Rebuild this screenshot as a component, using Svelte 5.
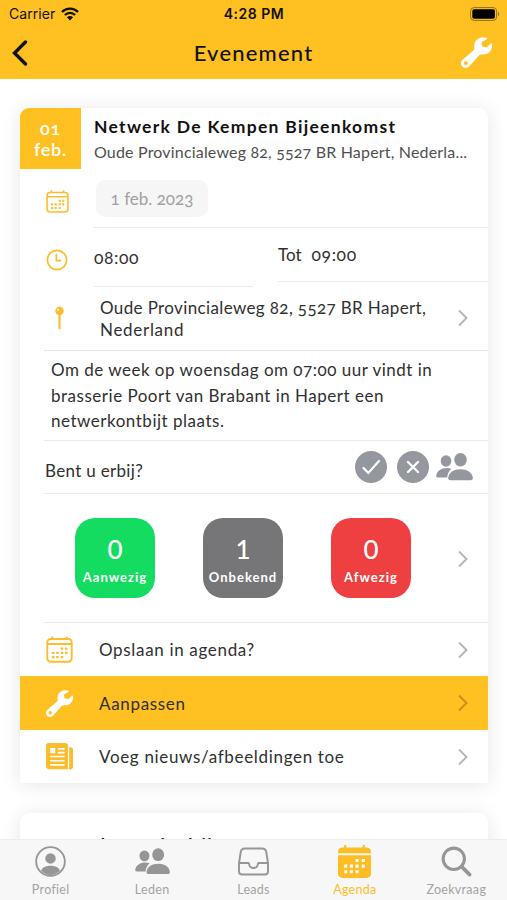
<script lang="ts">
  const counts = [
    { value: 0, label: 'Aanwezig', tone: 'present' },
    { value: 1, label: 'Onbekend', tone: 'unknown' },
    { value: 0, label: 'Afwezig', tone: 'absent' }
  ];

  const actions = [
    { icon: 'calendar', label: 'Opslaan in agenda?', key: 'save' },
    { icon: 'wrench', label: 'Aanpassen', key: 'edit' },
    { icon: 'news', label: 'Voeg nieuws/afbeeldingen toe', key: 'news' }
  ];

  const tabs = [
    { icon: 'profile', label: 'Profiel' },
    { icon: 'people', label: 'Leden' },
    { icon: 'tray', label: 'Leads' },
    { icon: 'agenda', label: 'Agenda' },
    { icon: 'search', label: 'Zoekvraag' }
  ];

  let activeTab = $state('Agenda');
</script>

{#snippet icon(name: string)}
  <svg class="icon {name}" viewBox="0 0 32 32" fill="none" stroke="currentColor">
    {#if name === 'calendar'}
      <rect x="1.5" y="3.5" width="29" height="27" rx="4" stroke-width="2.2" />
      <path d="M1.5 9.5h29M7.5 .5v3M24.500 .5v3" stroke-width="2.2" />
      <path d="M17.5 15h3M22.5 15h3M7 20h3M12 20h3M17.5 20h3M22.5 20h3M7 25h3M12 25h3M17.5 25h3" stroke-width="2.8" />
    {:else if name === 'clock'}
      <circle cx="16" cy="16" r="14" stroke-width="2.5" />
      <path d="M15 7v10h7" stroke-width="2.4" />
    {:else if name === 'pin'}
      <path d="M16 12v17" stroke-width="2.8" stroke-linecap="round" />
      <circle cx="16" cy="7" r="5.4" fill="currentColor" stroke="none" />
      <circle cx="14.3" cy="5.3" r="1.3" fill="#fff" stroke="none" />
    {:else if name === 'wrench'}
      <path fill="currentColor" stroke="none" fill-rule="evenodd" d="M26.800 1C21.500-.9 15.400 1.600 14 6.700c-.6 2-.5 3.200-.1 5 .1.800-.2 1.400-.8 2L1.600 23.600c-2.200 2-2.200 5 -.3 6.900s5.200 2 7.200-.2L18.900 18.800c.6-.6 1.200-.9 2-.8 6.300 1.200 12-3.500 11-10.800-.1-.7-.7-.8-1.200-.4L26.500 10.800l-4.500-1.100-.9-4.300 5.900-3.300c.5-.4.400-.8-.2-1.100zM5 25a2 2 0 1 1 0 4 2 2 0 0 1 0-4z" />
    {:else if name === 'news'}
      <path fill="currentColor" stroke="none" fill-rule="evenodd" d="M3 0h20a3 3 0 0 1 3 3v28H4a4 4 0 0 1-4-4V3a3 3 0 0 1 3-3zM5 6v6h6V6zM14 6h8v2h-8zM14 10.5h8v2h-8zM5 15h17v2H5zM5 20h17v2H5zM5 25h17v2H5z" />
      <path fill="currentColor" stroke="none" d="M27.500 5H29a3 3 0 0 1 3 3v20a3 3 0 0 1-5.500 2c1-1 1-2 1-3z" />
    {:else if name === 'profile'}
      <circle cx="16" cy="16" r="14.8" stroke-width="1.9" />
      <circle cx="16" cy="12.8" r="5.4" fill="currentColor" stroke="none" />
      <path fill="currentColor" stroke="none" d="M6.3 25.2c2-3.6 5.8-4.700 9.700-4.700s7.700 1.100 9.700 4.700A14 14 0 0 1 16 30a14 14 0 0 1-9.700-4.800z" />
    {:else if name === 'tray'}
      <path d="M7 2.500h18c2.400 0 3.600 1 4.100 3.200L31 18v8c0 2.400-1.300 3.500-3.500 3.500h-23C2.300 29.500 1 28.400 1 26v-8L2.900 5.700C3.400 3.500 4.600 2.500 7 2.500zM1 17.500h9.500c.8 0 1 .5 1 1.200 0 5.400 9 5.400 9 0 0-.7.200-1.200 1-1.200H31" stroke-width="2" />
    {:else if name === 'agenda'}
      <path fill="currentColor" stroke="none" d="M0 8V7c0-2.800 1.700-4.500 4.500-4.500H6V0h2v2.500h16V0h2v2.500h1.500C30.300 2.500 32 4.200 32 7v1z" />
      <path fill="currentColor" stroke="none" d="M0 10h32v17.500c0 2.800-1.700 4.500-4.500 4.500h-23C1.700 32 0 30.300 0 27.500z" />
      <path d="M17 15h3M23 15h3M6 20.500h3M11.500 20.500h3M17 20.500h3M23 20.500h3M6 26h3M11.500 26h3M17 26h3" stroke="#fff" stroke-width="3" />
    {:else if name === 'search'}
      <circle cx="13.200" cy="13.200" r="11" stroke-width="3.200" />
      <path d="M21.500 21.500l8 8" stroke-width="3.800" stroke-linecap="round" />
    {/if}
  </svg>
{/snippet}

{#snippet people()}
  <svg class="people" viewBox="0 0 37 28" fill="currentColor">
    <ellipse cx="10" cy="8" rx="5.300" ry="5.700" />
    <path d="M15.500 15.800C9 13.500 1 16.500.3 22.500c-.2 1.300.4 2 1.600 2h9.300c.3-3.500 1.500-6.400 4.300-8.700z" />
    <ellipse cx="24.500" cy="6.800" rx="6.300" ry="6.700" />
    <path d="M24.500 16.300c6.800 0 11.500 3 12.300 8.500.2 1.500-.7 2.500-2 2.500H14.200c-1.300 0-2.200-1-2-2.500.8-5.500 5.500-8.500 12.300-8.500z" />
  </svg>
{/snippet}

{#snippet chevron()}
  <svg class="chevron" viewBox="0 0 10 18" fill="none" stroke="currentColor">
    <path d="M1 1.500 8.500 9 1 16.500" stroke-width="1.900" />
  </svg>
{/snippet}

<div class="app">
  <header>
    <div class="status">
      <div class="carrier">
        <span>Carrier</span>
        <svg class="wifi" viewBox="0 0 18 14" fill="none" stroke="currentColor" stroke-width="2.400">
          <path d="M1 5c4.500-4.500 11.500-4.500 16 0M3.900 8c2.900-2.900 7.300-2.900 10.200 0" />
          <path d="M9 13.500 5.900 10.200c1.700-1.700 4.500-1.700 6.200 0z" fill="currentColor" stroke="none" />
        </svg>
      </div>
      <span class="time">4:28 PM</span>
      <svg class="battery" viewBox="0 0 30 14">
        <rect x=".6" y=".6" width="26" height="12.800" rx="3.500" fill="none" stroke="#8f7022" />
        <rect x="2.300" y="2.300" width="22.600" height="9.400" rx="1.800" />
        <path d="M28 4.800c1.600.7 1.600 3.700 0 4.400z" fill="#8f7022" />
      </svg>
    </div>
    <div class="navbar">
      <button aria-label="Terug">
        <svg class="back" viewBox="0 0 16 26" fill="none" stroke="currentColor">
          <path d="M13.500 2 2.500 13l11 11" stroke-width="3.400" stroke-linecap="round" />
        </svg>
      </button>
      <h1>Evenement</h1>
      <button class="settings" aria-label="Aanpassen">{@render icon('wrench')}</button>
    </div>
  </header>

  <main>
    <section class="card">
      <div class="summary">
        <div class="date-badge"><span class="day">01</span><span>feb.</span></div>
        <div class="heading">
          <h2>Netwerk De Kempen Bijeenkomst</h2>
          <p>Oude Provincialeweg 82, 5527 BR Hapert, Nederla...</p>
        </div>
      </div>

      <div class="row date-row">
        {@render icon('calendar')}
        <div class="field"><span class="chip">1 feb. 2023</span></div>
      </div>

      <div class="row time-row">
        {@render icon('clock')}
        <div class="from"><span class="hour">08:00</span></div>
        <div class="until"><span>Tot</span><span class="hour">09:00</span></div>
      </div>

      <div class="row place">
        {@render icon('pin')}
        <p>Oude Provincialeweg 82, 5527 BR Hapert,<br /><span class="country">Nederland</span></p>
        {@render chevron()}
      </div>

      <p class="description">
        Om de week op woensdag om 07:00 uur vindt in<br />
        brasserie Poort van Brabant in Hapert een<br />
        netwerkontbijt plaats.
      </p>

      <div class="attend">
        <span>Bent u erbij?</span>
        <svg class="round" viewBox="0 0 32 32" fill="none" stroke="#fff" stroke-width="2.200" stroke-linecap="round">
          <circle cx="16" cy="16" r="16" fill="#94979e" stroke="none" />
          <path d="m8.500 17 4.800 5L24 10" />
        </svg>
        <svg class="round" viewBox="0 0 32 32" fill="none" stroke="#fff" stroke-width="2.400" stroke-linecap="round">
          <circle cx="16" cy="16" r="16" fill="#94979e" stroke="none" />
          <path d="m11 11 10 10M21 11 11 21" />
        </svg>
        {@render people()}
      </div>

      <div class="counts">
        {#each counts as count}
          <div class="count {count.tone}">
            <strong>{count.value}</strong>
            <span>{count.label}</span>
          </div>
        {/each}
        {@render chevron()}
      </div>

      {#each actions as action}
        <div class="action {action.key}">
          {@render icon(action.icon)}
          <span>{action.label}</span>
          {@render chevron()}
        </div>
      {/each}
    </section>

    <section class="card next">
      <h2>Samenkomst bedrijven</h2>
    </section>
  </main>

  <nav>
    {#each tabs as tab}
      <button class="tab" class:active={tab.label === activeTab} onclick={() => (activeTab = tab.label)}>
        {#if tab.icon === 'people'}
          {@render people()}
        {:else}
          {@render icon(tab.icon)}
        {/if}
        <span>{tab.label}</span>
      </button>
    {/each}
  </nav>
</div>

<style>
  :global(body) {
    margin: 0;
  }

  .app {
    height: 900px;
    display: flex;
    flex-direction: column;
    overflow: hidden;
    background: #fff;
    color: #303030;
    font-family: Lato, 'Open Sans', sans-serif;
    font-size: 17px;
    font-variant-numeric: oldstyle-nums;
  }

  h1,
  h2,
  p {
    margin: 0;
    font-weight: 400;
  }

  button {
    padding: 0;
    border: 0;
    background: none;
    color: inherit;
    font: inherit;
  }

  svg {
    display: block;
    flex: none;
  }

  header {
    flex: none;
    height: 79px;
    background: #ffc021;
    color: #111;
  }

  .status {
    height: 27px;
    display: grid;
    grid-template-columns: 1fr auto 1fr;
    align-items: center;
    padding: 0 7px 0 9px;
    font-family: Inter, sans-serif;
    font-size: 14px;
    font-variant-numeric: normal;
  }

  .carrier {
    display: flex;
    align-items: center;
    gap: 6px;
    letter-spacing: 0.05px;
  }

  .wifi {
    width: 18px;
    height: 14px;
  }

  .time {
    margin-left: -1px;
    font-weight: 600;
    letter-spacing: 0.5px;
  }

  .battery {
    width: 30px;
    height: 14px;
    justify-self: end;
  }

  .navbar {
    height: 52px;
    display: grid;
    grid-template-columns: 50px 1fr 50px;
    align-items: center;
    padding: 0 14px 0 12px;
  }

  .navbar h1 {
    margin-top: -2px;
    padding-left: 2px;
    font-size: 22px;
    font-weight: 500;
    text-align: center;
    letter-spacing: 1.2px;
  }

  .back {
    width: 16px;
    height: 26px;
    margin-top: -1px;
  }

  .settings {
    color: #fff;
    justify-self: end;
  }

  .settings .icon {
    width: 31px;
    height: 31px;
    margin: -2px 1px 0 0;
  }

  main {
    flex: 1;
    min-height: 0;
    overflow: hidden;
    padding: 29px 19px 0 20px;
  }

  .card {
    border-radius: 9px 9px 2px 2px;
    background: #fff;
    box-shadow: 0 2px 20px rgba(0, 0, 0, 0.1);
  }

  .summary {
    display: flex;
    height: 61px;
  }

  .date-badge {
    width: 61px;
    flex: none;
    display: flex;
    flex-direction: column;
    align-items: center;
    justify-content: center;
    padding-top: 2px;
    box-sizing: border-box;
    border-radius: 9px 0 0;
    background: #ffc021;
    color: #fff;
    font-size: 18px;
    font-weight: 600;
    line-height: 21px;
    letter-spacing: 0.7px;
  }

  .day {
    margin-top: -2px;
  }

  .heading {
    padding: 8px 0 0 13px;
    white-space: nowrap;
  }

  h2 {
    color: #111;
    font-size: 17.5px;
    font-weight: 700;
    line-height: 22px;
    letter-spacing: 1.3px;
  }

  .heading p {
    margin-top: 3px;
    color: #505050;
    font-size: 16px;
    line-height: 21px;
    letter-spacing: 0.18px;
  }

  .row {
    display: flex;
  }

  .row > .icon {
    color: #fbbd2c;
  }

  .date-row > .icon {
    width: 23px;
    height: 23px;
    margin: 21px 24px 0 26px;
  }

  .field {
    flex: 1;
    height: 59px;
    padding: 11px 0 0 2px;
    box-sizing: border-box;
    border-bottom: 1px solid #ebebeb;
  }

  .chip {
    display: block;
    width: 112px;
    height: 37px;
    margin-left: 1px;
    border-radius: 9px;
    background: #f6f6f6;
    color: #a0a0a0;
    line-height: 38px;
    text-align: center;
  }

  .time-row > .icon {
    width: 22px;
    height: 22px;
    margin: 21px 26px 0 26px;
  }

  .from {
    width: 159px;
    height: 59px;
    box-sizing: border-box;
    border-bottom: 1px solid #ebebeb;
    line-height: 59px;
  }

  .until {
    flex: 1;
    height: 54px;
    display: flex;
    gap: 10px;
    margin-left: 25px;
    border-bottom: 1px solid #ebebeb;
    box-sizing: border-box;
    line-height: 54px;
  }

  .hour {
    font-size: 17.5px;
    letter-spacing: 0.6px;
  }

  .place {
    height: 65px;
    margin: -1px 0 0 24px;
    box-sizing: border-box;
    border-bottom: 1px solid #e6e6e6;
    padding: 11px 20px 0 0;
  }

  .place .icon {
    width: 26px;
    height: 26px;
    margin: 8px 28px 0 2px;
    padding-left: 1px;
    box-sizing: border-box;
  }

  .place p {
    flex: 1;
    line-height: 22px;
    letter-spacing: 0.37px;
    white-space: nowrap;
  }

  .country {
    letter-spacing: 0.7px;
  }

  .chevron {
    width: 10px;
    height: 18px;
    color: #b6b6b8;
  }

  .place .chevron {
    margin-top: 12px;
  }

  .description {
    height: 90px;
    margin-left: 24px;
    padding: 6px 0 0 7px;
    box-sizing: border-box;
    border-bottom: 1px solid #e9e9e9;
    line-height: 25.500px;
    letter-spacing: 0.52px;
    word-spacing: -0.1px;
    white-space: nowrap;
  }

  .attend {
    height: 53px;
    display: flex;
    align-items: center;
    gap: 9.500px;
    margin-left: 24px;
    padding: 0 15px 0 1px;
    box-sizing: border-box;
    border-bottom: 1px solid #e9e9e9;
  }

  .attend span {
    flex: 1;
    padding-top: 6px;
    letter-spacing: 0.32px;
  }

  .attend .round {
    width: 32px;
    height: 32px;
  }

  .attend .people {
    width: 37px;
    height: 28px;
    margin-left: -2px;
    color: #94979e;
  }

  .counts {
    height: 129px;
    display: flex;
    align-items: center;
    gap: 48px;
    margin-left: 24px;
    padding: 0 20px 0 31px;
    box-sizing: border-box;
    border-bottom: 1px solid #e9e9e9;
  }

  .counts .chevron {
    margin: 2px 0 0 -1px;
  }

  .count {
    width: 80px;
    height: 80px;
    flex: none;
    display: flex;
    flex-direction: column;
    align-items: center;
    border-radius: 20px;
    color: #fff;
  }

  .present {
    background: #13dc60;
  }

  .unknown {
    background: #767678;
  }

  .absent {
    background: #ef4041;
  }

  .count strong {
    margin-top: 15px;
    font-size: 26px;
    font-weight: 500;
    font-variant-numeric: normal;
    line-height: 32px;
  }

  .count span {
    margin-top: 4px;
    font-size: 13px;
    font-weight: 700;
    line-height: 16px;
    letter-spacing: 1px;
  }

  .action {
    height: 54px;
    display: flex;
    align-items: center;
    padding: 0 20px 0 26px;
  }

  .action .icon {
    width: 27px;
    height: 27px;
    margin-right: 26px;
    color: #fbbd2c;
  }

  .action span {
    flex: 1;
    letter-spacing: 0.67px;
  }

  .action.save {
    height: 53px;
  }

  .action.edit {
    background: #ffc021;
  }

  .edit .icon {
    color: #fff;
  }

  .edit .chevron {
    color: #c48f1a;
  }

  .action.news {
    height: 53px;
  }

  .next {
    height: 80px;
    margin-top: 30px;
    padding: 21px 22px 0;
    box-sizing: border-box;
  }

  nav {
    flex: none;
    height: 61px;
    display: grid;
    grid-template-columns: repeat(5, 1fr);
    border-top: 1px solid #ececec;
    box-sizing: border-box;
    background: #f7f7f7;
  }

  .tab {
    display: flex;
    flex-direction: column;
    align-items: center;
    color: #a3a3a3;
    font-size: 12.5px;
    line-height: 14px;
    letter-spacing: 0.3px;
  }

  .tab .icon,
  .tab .people {
    width: 31px;
    height: 31px;
    margin: 6px 0 6px;
    color: #969696;
  }

  .tab .people {
    width: 35px;
  }

  .tab.active,
  .tab .agenda {
    color: #ffbd25;
  }

  .tab .agenda {
    width: 33px;
    height: 33px;
    margin: 5px 0;
  }
</style>
